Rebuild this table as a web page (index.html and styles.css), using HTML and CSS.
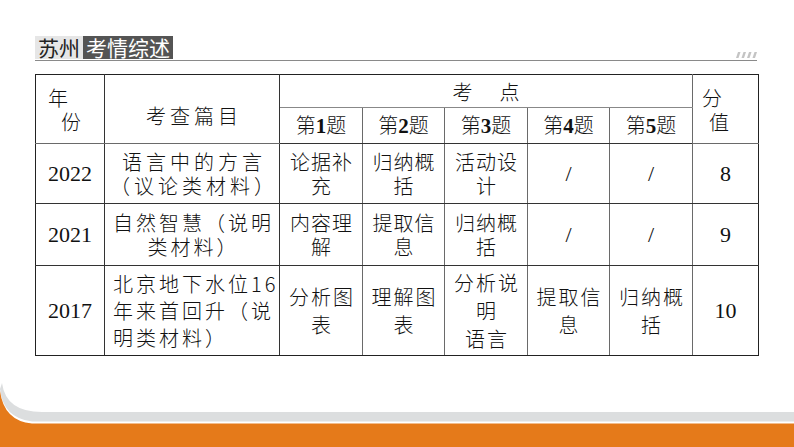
FILE: index.html
```html
<!DOCTYPE html>
<html lang="zh">
<head>
<meta charset="utf-8">
<link rel="stylesheet" href="styles.css">
</head>
<body>
<div class="page">
  <div class="title">
    <span class="tag-light">苏州</span><span class="tag-dark">考情综述</span>
    <svg class="slashes" width="21" height="6" viewBox="0 0 21 6">
      <polygon points="2,0 4.5,0 2.5,6 0,6" fill="#c4c4c4"/>
      <polygon points="7.5,0 10,0 8,6 5.5,6" fill="#c4c4c4"/>
      <polygon points="13,0 15.5,0 13.5,6 11,6" fill="#c4c4c4"/>
      <polygon points="18.5,0 21,0 19,6 16.5,6" fill="#c4c4c4"/>
    </svg>
  </div>

  <table class="grid">
    <colgroup>
      <col class="c-year"><col class="c-title"><col class="c-q"><col class="c-q2"><col class="c-q"><col class="c-q2"><col class="c-q"><col class="c-score">
    </colgroup>
    <tr class="r-h1">
      <td rowspan="2" class="head-year"><span class="y1">年</span><span class="y2">份</span></td>
      <td rowspan="2" class="head-title">考查篇目</td>
      <td colspan="5" class="head-points"><span class="kd">考</span><span>点</span></td>
      <td rowspan="2" class="head-score"><span class="s1">分</span><span class="s2">值</span></td>
    </tr>
    <tr class="r-h2">
      <td class="qn">第<b>1</b>题</td>
      <td class="qn">第<b>2</b>题</td>
      <td class="qn">第<b>3</b>题</td>
      <td class="qn">第<b>4</b>题</td>
      <td class="qn">第<b>5</b>题</td>
    </tr>
    <tr class="r-2022">
      <td class="yr">2022</td>
      <td class="ttl wide">语言中的方言<br>（议论类材料）</td>
      <td class="cell">论据补<br>充</td>
      <td class="cell">归纳概<br>括</td>
      <td class="cell">活动设<br>计</td>
      <td class="num">/</td>
      <td class="num">/</td>
      <td class="num">8</td>
    </tr>
    <tr class="r-2021">
      <td class="yr">2021</td>
      <td class="ttl mid">自然智慧（说明<br>类材料）</td>
      <td class="cell">内容理<br>解</td>
      <td class="cell">提取信<br>息</td>
      <td class="cell">归纳概<br>括</td>
      <td class="num">/</td>
      <td class="num">/</td>
      <td class="num">9</td>
    </tr>
    <tr class="r-2017">
      <td class="yr">2017</td>
      <td class="ttl left">北京地下水位16<br>年来首回升（说<br>明类材料）</td>
      <td class="cell">分析图<br>表</td>
      <td class="cell">理解图<br>表</td>
      <td class="cell">分析说<br>明<br>语言</td>
      <td class="cell">提取信<br>息</td>
      <td class="cell">归纳概<br>括</td>
      <td class="num">10</td>
    </tr>
  </table>
</div>

<svg class="footer" width="794" height="67" viewBox="0 380 794 67" preserveAspectRatio="none">
  <path d="M2,383 Q6,412 42,412 L794,412 L794,421.5 L32,421.5 Q3,418 0,389 Z" fill="#dcdedf"/>
  <path d="M0,391 Q4,421 32,423.5 L794,423.5 L794,447 L0,447 Z" fill="#e57a1a"/>
</svg>
</body>
</html>
```
FILE: styles.css
```css
html, body {
  margin: 0;
  padding: 0;
  background: #ffffff;
}
body {
  width: 794px;
  height: 447px;
  overflow: hidden;
  position: relative;
  font-family: "Noto Sans CJK SC", "Noto Sans", sans-serif;
  color: #111;
}
.page {
  padding: 36px 0 0 35px;
}
.title {
  display: flex;
  align-items: flex-start;
  width: 722px;
  height: 24px;
  border-bottom: 1px solid #8a8a8a;
}
.tag-light, .tag-dark {
  height: 23px;
  line-height: 23px;
  font-size: 21px;
  display: inline-block;
}
.tag-light {
  background: #e6e6e6;
  color: #222;
  width: 48px;
  text-align: center;
}
.tag-dark {
  background: #545454;
  color: #fff;
  width: 90px;
  text-align: center;
}
.slashes {
  margin-left: auto;
  margin-top: 16px;
}
.grid {
  margin-top: 13px;
  border-collapse: collapse;
  table-layout: fixed;
  width: 723px;
  font-size: 20px;
  font-weight: 300;
}
.c-year { width: 69px; }
.c-title { width: 175px; }
.c-q { width: 83px; }
.c-q2 { width: 82px; }
.c-score { width: 66px; }
.grid td {
  border: 1px solid #6a6a6a;
  padding: 0;
  text-align: center;
  vertical-align: middle;
}
.grid tr > td:first-child { border-left-color: #222; }
.grid tr > td:last-child { border-right-color: #222; }
.r-h1 td { border-top-color: #222; }
.r-h2 td, .r-2022 td, .r-2021 td { border-bottom-color: #333; }
.r-2017 td { border-bottom-color: #222; }
.grid td.yr, .grid td.ttl { border-right-color: #333; }
.head-year, .head-title { border-right-color: #333 !important; }
.head-points { border-bottom-color: #888 !important; }

.r-h1 { height: 33px; }
.r-h2 { height: 35px; }
.r-2022 { height: 60px; }
.r-2021 { height: 62px; }
.r-2017 { height: 90px; }

.head-year, .head-score {
  text-align: left !important;
  line-height: 24px;
}
.head-year span, .head-score span { display: block; }
.y1 { padding-left: 12px; padding-top: 2px; }
.y2 { padding-left: 25px; }
.s1 { padding-left: 9px; padding-top: 2px; }
.s2 { padding-left: 16px; }
.head-title {
  letter-spacing: 4px;
  padding-left: 4px !important;
  padding-top: 12px !important;
}
.head-points {
  vertical-align: bottom !important;
  line-height: 31px;
}
.kd { margin-right: 27px; }
.qn {
  line-height: 33px;
}
.qn b {
  font-family: "Liberation Serif", serif;
  font-weight: bold;
  font-size: 21px;
}
.yr {
  font-family: "Liberation Serif", serif;
  font-size: 22px;
  font-weight: normal;
}
.num {
  font-family: "Liberation Serif", serif;
  font-size: 22px;
}
.ttl { line-height: 24px; }
.wide { letter-spacing: 4px; padding-left: 4px !important; }
.mid { letter-spacing: 3px; padding-left: 3px !important; }
.left { letter-spacing: 3px; text-align: left !important; padding-left: 8px !important; line-height: 27px; }
.cell { letter-spacing: 1px; padding-left: 1px !important; line-height: 24px; }
.r-2017 .cell { letter-spacing: 2px; padding-left: 2px !important; line-height: 28px; }
.footer {
  position: absolute;
  left: 0;
  top: 380px;
  display: block;
}
```
